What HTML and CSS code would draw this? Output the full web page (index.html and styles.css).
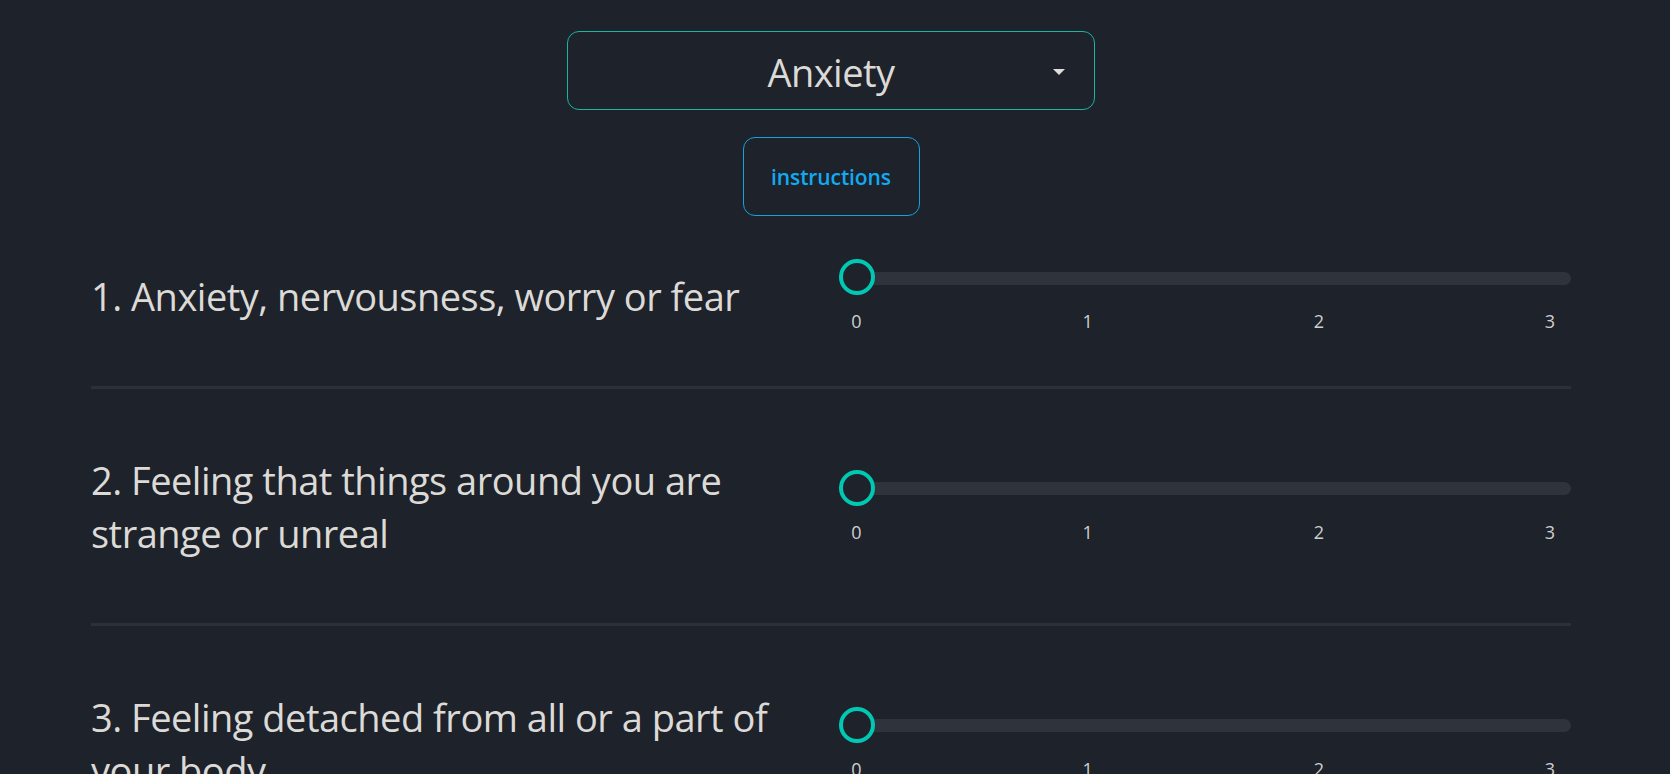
FILE: index.html
```html
<!DOCTYPE html>
<html lang="en">
<head>
<meta charset="utf-8">
<title>Anxiety</title>
<link rel="stylesheet" href="styles.css">
</head>
<body>
<div class="page">
  <div class="select">
    <span></span>
    <span class="select-value">Anxiety</span>
    <span class="select-arrow"></span>
  </div>
  <button class="instructions">instructions</button>
  <div class="questions">
    <div class="q">
      <div class="q-text">1. Anxiety, nervousness, worry or fear</div>
      <div class="slider">
        <div class="rail"><div class="track"></div><div class="thumb"></div></div>
        <div class="ticks"><span>0</span><span>1</span><span>2</span><span>3</span></div>
      </div>
    </div>
    <div class="q">
      <div class="q-text">2. Feeling that things around you are strange or unreal</div>
      <div class="slider">
        <div class="rail"><div class="track"></div><div class="thumb"></div></div>
        <div class="ticks"><span>0</span><span>1</span><span>2</span><span>3</span></div>
      </div>
    </div>
    <div class="q">
      <div class="q-text">3. Feeling detached from all or a part of your body</div>
      <div class="slider">
        <div class="rail"><div class="track"></div><div class="thumb"></div></div>
        <div class="ticks"><span>0</span><span>1</span><span>2</span><span>3</span></div>
      </div>
    </div>
  </div>
</div>
</body>
</html>
```
FILE: styles.css
```css
html, body {
  margin: 0;
  padding: 0;
  background: #1e222a;
  overflow: hidden;
}
body {
  font-family: "Open Sans", "Noto Sans", sans-serif;
  color: #dcdad7;
}
.page {
  padding: 31px 99px 0 91px;
  display: flex;
  flex-direction: column;
  align-items: center;
}
.select {
  box-sizing: border-box;
  width: 528px;
  height: 79px;
  border: 1px solid #19b5a5;
  border-radius: 12px;
  display: grid;
  grid-template-columns: 1fr auto 1fr;
  align-items: center;
}
.select-value {
  font-size: 38px;
  letter-spacing: -0.5px;
  color: #dcdad7;
  line-height: 1;
  padding-top: 2px;
}
.select-arrow {
  justify-self: end;
  margin-right: 29px;
  width: 0;
  height: 0;
  border-left: 6px solid transparent;
  border-right: 6px solid transparent;
  border-top: 6px solid #dedede;
  margin-top: 3px;
}
.instructions {
  box-sizing: border-box;
  margin-top: 27px;
  width: 177px;
  height: 79px;
  background: transparent;
  border: 1px solid #1a9fe0;
  border-radius: 12px;
  color: #12aaf0;
  font-family: "Open Sans", sans-serif;
  font-size: 21px;
  font-weight: 600;
  letter-spacing: -0.1px;
  padding: 0;
}
.questions {
  align-self: stretch;
}
.q {
  display: grid;
  grid-template-columns: 1fr 1fr;
  column-gap: 15px;
  align-items: center;
  padding: 65px 0 63px;
  border-bottom: 3px solid #2d3038;
}
.q:first-child {
  padding-top: 43px;
  padding-bottom: 52px;
}
.q-text {
  font-size: 38px;
  letter-spacing: -0.5px;
  line-height: 53px;
}
.rail {
  position: relative;
  height: 36px;
  display: flex;
  align-items: center;
}
.track {
  flex: 1;
  height: 13px;
  border-radius: 7px;
  background: #2f333c;
  margin-top: 2px;
}
.thumb {
  position: absolute;
  left: 0;
  top: 0;
  box-sizing: border-box;
  width: 36px;
  height: 36px;
  border-radius: 50%;
  border: 4px solid #00c8b3;
  background: #1e222a;
}
.ticks {
  margin-top: 13px;
  padding-right: 3px;
  display: flex;
  justify-content: space-between;
  font-size: 18px;
  line-height: 26px;
  color: #cfcfcf;
}
.ticks span {
  width: 36px;
  text-align: center;
}
```
